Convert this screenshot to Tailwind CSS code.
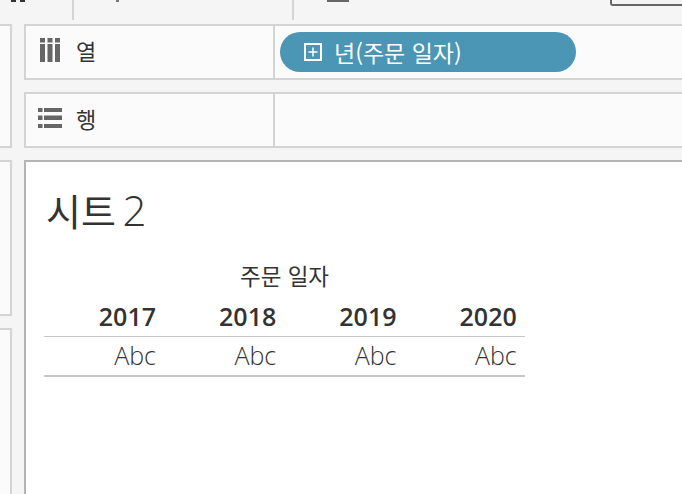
<!DOCTYPE html>
<html lang="ko">
<head>
  <meta charset="UTF-8">
  <title>시트 2</title>
  <script src="https://cdn.jsdelivr.net/npm/@tailwindcss/browser@4"></script>
</head>
<body class="w-[682px] h-[494px] overflow-hidden bg-[#f5f5f5] text-[#333] font-['Noto_Sans_CJK_KR','Noto_Sans',sans-serif]">

  <!-- toolbar, cut off at the top -->
  <div class="h-6 flex items-start">
    <div class="w-[74px] h-5 border-r-2 border-[#d4d4d4] flex pl-[11px] gap-[4px]">
      <span class="w-[5px] h-[2px] bg-[#333]"></span>
      <span class="w-[5px] h-[2px] bg-[#333]"></span>
    </div>
    <div class="w-[220px] h-5 border-r-2 border-[#d4d4d4] pl-[42px]">
      <span class="block w-[3px] h-[2px] bg-[#777]"></span>
    </div>
    <div class="flex-1 pl-[33px]">
      <span class="block w-[22px] h-[2px] bg-[#666]"></span>
    </div>
    <div class="w-[72px] h-[6px] border-l-2 border-b-2 border-[#666] rounded-bl-[3px]"></div>
  </div>

  <div class="flex gap-3 items-start">
    <!-- left side panels -->
    <div class="w-3 flex flex-col gap-3">
      <div class="h-[124px] bg-[#fbfbfb] border-2 border-l-0 border-[#d4d4d4]"></div>
      <div class="h-[156px] bg-[#fbfbfb] border-2 border-l-0 border-[#d4d4d4]"></div>
      <div class="h-[180px] bg-[#fbfbfb] border-2 border-l-0 border-[#d4d4d4]"></div>
    </div>

    <div class="flex-1 flex flex-col gap-3">
      <!-- columns shelf -->
      <div class="h-14 flex bg-[#fbfbfb] border-y-2 border-l-2 border-[#d4d4d4]">
        <div class="w-[249px] flex items-center border-r-2 border-[#d4d4d4] pl-[14px]">
          <svg class="w-5 h-6 shrink-0 mb-1" viewBox="0 0 20 24" fill="#666">
            <rect x="0" y="0" width="5" height="4.5"/><rect x="0" y="6" width="5" height="18"/>
            <rect x="7.5" y="0" width="5" height="4.5"/><rect x="7.5" y="6" width="5" height="18"/>
            <rect x="15" y="0" width="5" height="4.5"/><rect x="15" y="6" width="5" height="18"/>
          </svg>
          <span class="ml-4 mb-1 text-[22px] leading-none">열</span>
        </div>
        <div class="flex-1 flex items-center pl-[5px]">
          <div class="w-[296px] h-10 rounded-[20px] bg-[#4a96b4] flex items-center pl-[24px] text-white">
            <svg class="w-[18px] h-[18px] shrink-0" viewBox="0 0 18 18" fill="none" stroke="#fff" stroke-width="2">
              <rect x="1" y="1" width="16" height="16"/>
              <path d="M4.5 9h9M9 4.5v9" stroke-width="1.5"/>
            </svg>
            <span class="ml-[12px] text-[23px] leading-none">년(주문 일자)</span>
          </div>
        </div>
      </div>

      <!-- rows shelf -->
      <div class="h-14 flex bg-[#fbfbfb] border-y-2 border-l-2 border-[#d4d4d4]">
        <div class="w-[249px] flex items-center border-r-2 border-[#d4d4d4] pl-[12px]">
          <svg class="w-6 h-5 shrink-0 mb-1" viewBox="0 0 24 20" fill="#666">
            <rect x="0" y="0" width="4.5" height="4"/><rect x="6" y="0" width="18" height="4"/>
            <rect x="0" y="7.5" width="4.5" height="4.5"/><rect x="6" y="7.5" width="18" height="4.5"/>
            <rect x="0" y="16" width="4.5" height="4"/><rect x="6" y="16" width="18" height="4"/>
          </svg>
          <span class="ml-[14px] mb-1 text-[22px] leading-none">행</span>
        </div>
        <div class="flex-1"></div>
      </div>

      <!-- view -->
      <div class="h-[340px] bg-white border-t-2 border-l-2 border-[#b4b4b4] pl-[18px]">
        <h1 class="pl-[2px] pt-[24px] text-[38px] leading-[48px] text-[#333] [word-spacing:-4px]">시트 <span class="font-['Open_Sans',sans-serif] font-light text-[42px] leading-none">2</span></h1>
        <div class="w-[481px] mt-[27px]">
          <div class="h-[30px] pb-[2px] flex items-center justify-center text-[22.5px] leading-none">주문 일자</div>
          <div class="grid grid-cols-4 h-[46px] pt-[6px] border-b border-[#c8c8c8] text-right font-['Open_Sans',sans-serif] font-semibold text-[25px] leading-[38px]">
            <div class="w-[120px] pr-2">2017</div>
            <div class="w-[120px] pr-2">2018</div>
            <div class="w-[120px] pr-2">2019</div>
            <div class="w-[120px] pr-2">2020</div>
          </div>
          <div class="grid grid-cols-4 h-10 border-b-2 border-[#c8c8c8] text-right font-['Open_Sans',sans-serif] font-light text-[25px] leading-[36px]">
            <div class="w-[120px] pr-2">Abc</div>
            <div class="w-[120px] pr-2">Abc</div>
            <div class="w-[120px] pr-2">Abc</div>
            <div class="w-[120px] pr-2">Abc</div>
          </div>
        </div>
      </div>
    </div>
  </div>
</body>
</html>
